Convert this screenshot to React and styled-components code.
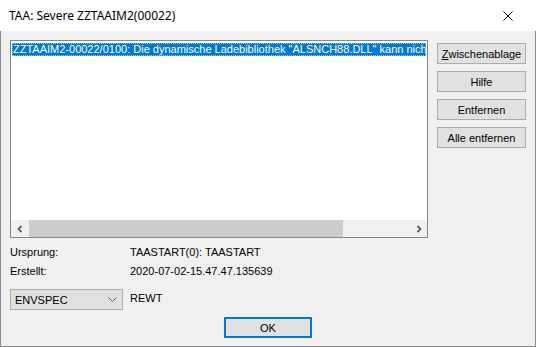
import React from "react";
import styled, { createGlobalStyle } from "styled-components";

const GlobalStyle = createGlobalStyle`
  html, body {
    margin: 0;
    padding: 0;
    background: #ffffff;
  }
  #root {
    width: 536px;
    height: 347px;
  }
`;

const Window = styled.div`
  width: 536px;
  height: 347px;
  display: flex;
  flex-direction: column;
  box-sizing: border-box;
  font-family: "Liberation Sans", Arial, sans-serif;
  font-size: 11px;
  color: #000;
`;

const TitleBar = styled.div`
  height: 31px;
  flex: none;
  display: flex;
  align-items: center;
  justify-content: space-between;
  padding-left: 9px;
  background: #ffffff;
  font-family: "Noto Sans", "Liberation Sans", sans-serif;
  font-size: 12px;
`;

const CloseButton = styled.div`
  width: 46px;
  height: 31px;
  margin-right: 5px;
  display: flex;
  align-items: center;
  justify-content: center;
`;

const Body = styled.div`
  flex: 1;
  display: flex;
  flex-direction: column;
  box-sizing: border-box;
  padding: 9px 10px 0 9px;
  background: #f0f0f0;
  border: 1px solid #8a8a8a;
  border-top: none;
`;

const TopRow = styled.div`
  display: flex;
  align-items: flex-start;
  gap: 9px;
`;

const ListBox = styled.div`
  width: 418px;
  height: 198px;
  box-sizing: border-box;
  display: flex;
  flex-direction: column;
  background: #ffffff;
  border: 1px solid #828790;
`;

const ListItems = styled.div`
  flex: 1;
  overflow: hidden;
  padding: 2px 1px 0 1px;
`;

const ListItem = styled.div`
  height: 13px;
  line-height: 13px;
  white-space: nowrap;
  overflow: hidden;
  padding-left: 1px;
  background: ${(p) => (p.$selected ? "#0078d7" : "transparent")};
  color: ${(p) => (p.$selected ? "#ffffff" : "#000000")};
  outline: ${(p) => (p.$selected ? "1px dotted #9fc7ee" : "none")};
  outline-offset: -1px;
`;

const ScrollBar = styled.div`
  height: 17px;
  flex: none;
  display: flex;
  align-items: center;
  background: #f0f0f0;
`;

const ScrollArrow = styled.div`
  width: 17px;
  height: 17px;
  flex: none;
  display: flex;
  align-items: center;
  justify-content: center;
`;

const Track = styled.div`
  flex: 1;
  height: 17px;
  display: flex;
  align-items: center;
`;

const Thumb = styled.div`
  width: ${(p) => p.$width}px;
  height: 17px;
  margin-left: 1px;
  background: #cdcdcd;
`;

const ButtonColumn = styled.div`
  display: flex;
  flex-direction: column;
  gap: 7px;
  margin-top: 3px;
`;

const Button = styled.div`
  width: ${(p) => p.$width || 89}px;
  height: 21px;
  box-sizing: border-box;
  display: flex;
  align-items: center;
  justify-content: center;
  background: #e1e1e1;
  border: ${(p) => (p.$default ? "2px solid #0078d7" : "1px solid #adadad")};
  white-space: nowrap;
`;

const AccelLabel = styled.span`
  display: block;
  &::first-letter {
    text-decoration: underline;
  }
`;

const InfoGrid = styled.div`
  display: grid;
  grid-template-columns: 120px auto;
  row-gap: 6px;
  margin-top: 8px;
  line-height: 13px;
`;

const ComboRow = styled.div`
  display: flex;
  align-items: center;
  gap: 7px;
  margin-top: 11px;
`;

const Combo = styled.div`
  width: 113px;
  height: 21px;
  box-sizing: border-box;
  display: flex;
  align-items: center;
  justify-content: space-between;
  padding: 0 5px 0 4px;
  background: #e1e1e1;
  border: 1px solid #adadad;
`;

const ComboValue = styled.span`
  margin-top: -3px;
`;

const Footer = styled.div`
  display: flex;
  justify-content: center;
  margin-top: 7px;
  padding-left: 1px;
`;

const Chevron = ({ dir }) => (
  <svg width="8" height="8" viewBox="0 0 8 8">
    <path
      d={dir === "left" ? "M5.5 1 L2.5 4 L5.5 7" : "M2.5 1 L5.5 4 L2.5 7"}
      fill="none"
      stroke="#606060"
      strokeWidth="1.8"
    />
  </svg>
);

export default function App() {
  return (
    <>
      <GlobalStyle />
      <Window>
        <TitleBar>
          <span>TAA: Severe ZZTAAIM2(00022)</span>
          <CloseButton>
            <svg width="10" height="10" viewBox="0 0 10 10">
              <path d="M0.5 0.5 L9.5 9.5 M9.5 0.5 L0.5 9.5" stroke="#000" strokeWidth="1" />
            </svg>
          </CloseButton>
        </TitleBar>
        <Body>
          <TopRow>
            <ListBox>
              <ListItems>
                <ListItem $selected>
                  ZZTAAIM2-00022/0100: Die dynamische Ladebibliothek "ALSNCH88.DLL" kann nicht geladen werden.
                </ListItem>
              </ListItems>
              <ScrollBar>
                <ScrollArrow>
                  <Chevron dir="left" />
                </ScrollArrow>
                <Track>
                  <Thumb $width={314} />
                </Track>
                <ScrollArrow>
                  <Chevron dir="right" />
                </ScrollArrow>
              </ScrollBar>
            </ListBox>
            <ButtonColumn>
              <Button>
                <AccelLabel>Zwischenablage</AccelLabel>
              </Button>
              <Button>Hilfe</Button>
              <Button>Entfernen</Button>
              <Button>Alle entfernen</Button>
            </ButtonColumn>
          </TopRow>
          <InfoGrid>
            <span>Ursprung:</span>
            <span>TAASTART(0): TAASTART</span>
            <span>Erstellt:</span>
            <span>2020-07-02-15.47.47.135639</span>
          </InfoGrid>
          <ComboRow>
            <Combo>
              <span>ENVSPEC</span>
              <svg width="9" height="6" viewBox="0 0 9 6">
                <path d="M0.5 0.5 L4.5 4.5 L8.5 0.5" fill="none" stroke="#606060" strokeWidth="1" />
              </svg>
            </Combo>
            <ComboValue>REWT</ComboValue>
          </ComboRow>
          <Footer>
            <Button $default $width={88}>
              OK
            </Button>
          </Footer>
        </Body>
      </Window>
    </>
  );
}
